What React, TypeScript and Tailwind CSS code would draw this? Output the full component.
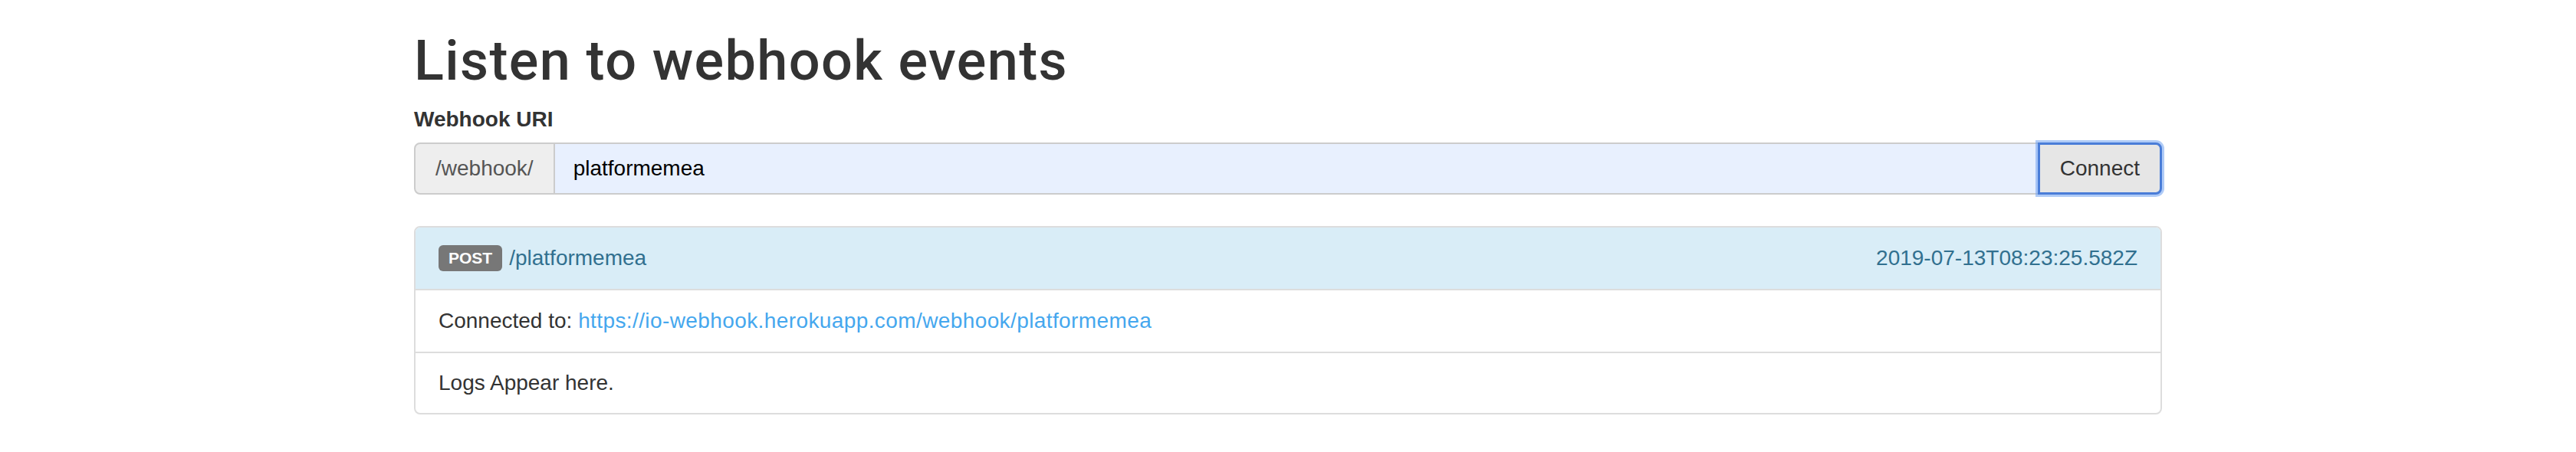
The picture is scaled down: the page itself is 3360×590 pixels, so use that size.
export default function App() {
  return (
    <div className="min-h-[590px] bg-white font-['Liberation_Sans',Arial,sans-serif] text-[28px] leading-[40px] text-[#333]">
      <div className="mx-auto w-[2280px] pt-[40px]">
        <h1 className="mb-[17px] font-['Roboto',Arial,sans-serif] text-[72px] leading-[79px] font-medium tracking-[1.4px] text-[#333]">
          Listen to webhook events
        </h1>

        <label className="mb-[10px] block text-[28px] leading-[40px] font-bold">Webhook URI</label>
        <div className="flex h-[68px]">
          <span className="flex items-center rounded-l-[8px] border-2 border-[#ccc] bg-[#eee] px-[26px] text-[#555]">
            /webhook/
          </span>
          <input
            type="text"
            defaultValue="platformemea"
            className="min-w-0 flex-1 border-y-2 border-[#ccc] bg-[#e8f0fe] px-[24px] text-[28px] text-black outline-none"
          />
          <button className="relative -ml-[1px] rounded-r-[8px] border-[3px] border-[#4a7dd8] bg-[#e6e6e6] px-[26px] text-[28px] text-[#333] shadow-[0_0_0_3px_rgba(110,160,240,0.55)]">
            Connect
          </button>
        </div>

        <div className="mt-[41px] overflow-hidden rounded-[8px] border-2 border-[#ddd]">
          <div className="flex items-center justify-between border-b-2 border-[#ddd] bg-[#d9edf7] px-[30px] py-[20px] text-[#31708f]">
            <div className="flex items-center">
              <span className="mr-[9px] rounded-[6px] bg-[#777] px-[13px] py-[6px] text-[21px] leading-[22px] font-bold text-white">
                POST
              </span>
              <span>/platformemea</span>
            </div>
            <span>2019-07-13T08:23:25.582Z</span>
          </div>
          <div className="border-b-2 border-[#ddd] px-[30px] py-[20px]">
            Connected to:{" "}
            <a href="#" className="tracking-[0.4px] text-[#45a7ee]">
              https://io-webhook.herokuapp.com/webhook/platformemea
            </a>
          </div>
          <div className="px-[30px] py-[19px]">Logs Appear here.</div>
        </div>
      </div>
    </div>
  );
}
